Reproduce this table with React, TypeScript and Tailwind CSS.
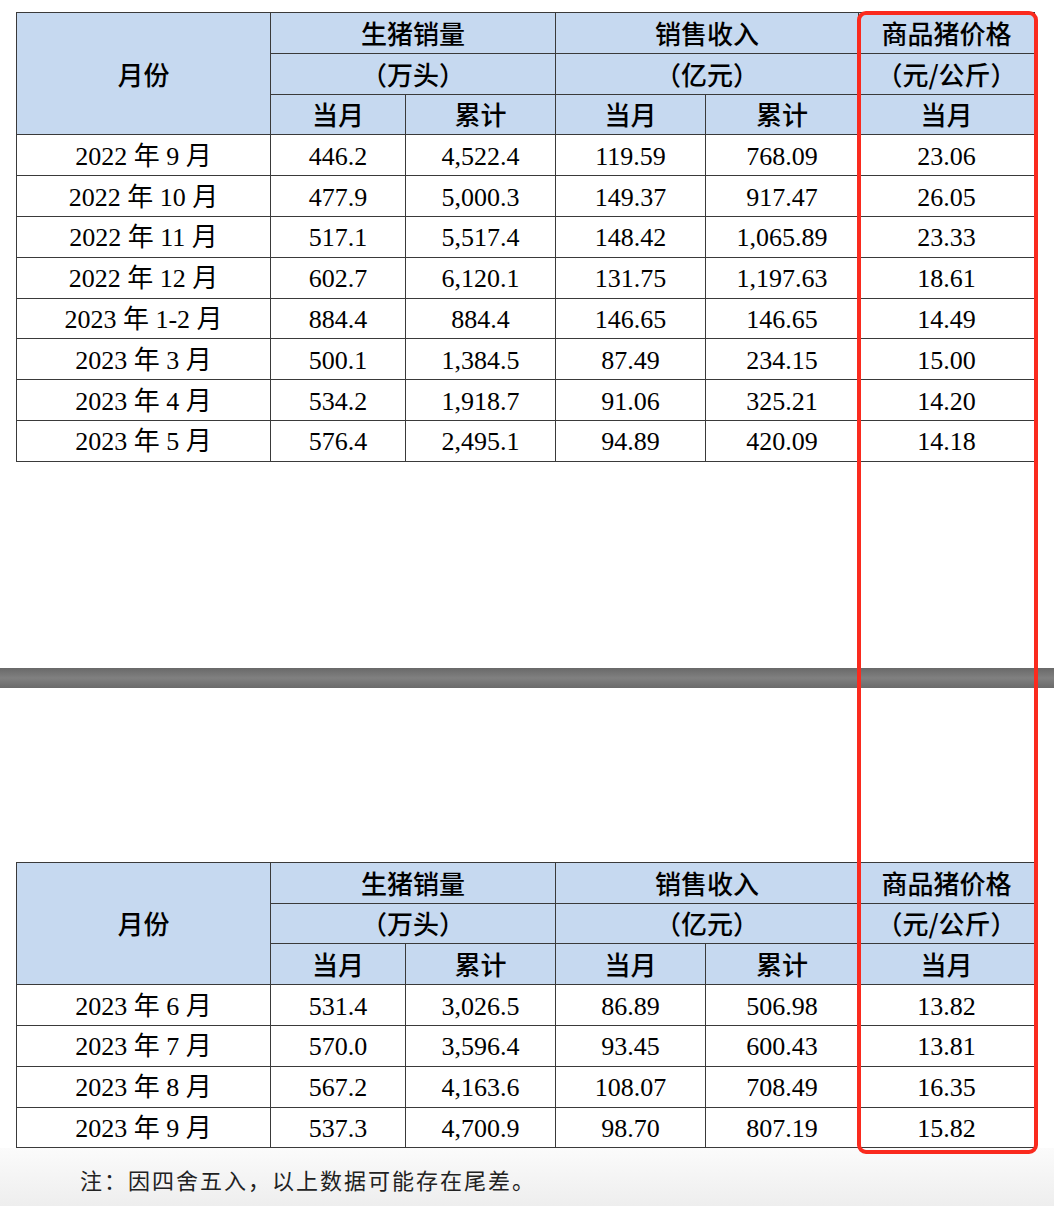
import React from "react";

type Row = [string, string, string, string, string, string];

const firstRows: Row[] = [
  ["2022 年 9 月", "446.2", "4,522.4", "119.59", "768.09", "23.06"],
  ["2022 年 10 月", "477.9", "5,000.3", "149.37", "917.47", "26.05"],
  ["2022 年 11 月", "517.1", "5,517.4", "148.42", "1,065.89", "23.33"],
  ["2022 年 12 月", "602.7", "6,120.1", "131.75", "1,197.63", "18.61"],
  ["2023 年 1-2 月", "884.4", "884.4", "146.65", "146.65", "14.49"],
  ["2023 年 3 月", "500.1", "1,384.5", "87.49", "234.15", "15.00"],
  ["2023 年 4 月", "534.2", "1,918.7", "91.06", "325.21", "14.20"],
  ["2023 年 5 月", "576.4", "2,495.1", "94.89", "420.09", "14.18"],
];

const secondRows: Row[] = [
  ["2023 年 6 月", "531.4", "3,026.5", "86.89", "506.98", "13.82"],
  ["2023 年 7 月", "570.0", "3,596.4", "93.45", "600.43", "13.81"],
  ["2023 年 8 月", "567.2", "4,163.6", "108.07", "708.49", "16.35"],
  ["2023 年 9 月", "537.3", "4,700.9", "98.70", "807.19", "15.82"],
];

const serif = "font-['Liberation_Serif','Noto_Sans_CJK_SC',serif]";
const head =
  "border border-[#3a3a3a] bg-[#c6d9f0] text-center text-[26px] font-medium leading-none text-black font-['Noto_Sans_CJK_SC',sans-serif]";
const cell = `border border-[#3a3a3a] pt-[3px] text-center text-[26px] leading-none text-black ${serif}`;

// one half of the report: three header rows and the monthly data
const PigTable = ({ rows }: { rows: Row[] }) => (
  <table className="w-[1018px] table-fixed border-collapse border border-black">
    <colgroup>
      <col className="w-[254px]" />
      <col className="w-[135px]" />
      <col className="w-[150px]" />
      <col className="w-[150px]" />
      <col className="w-[153px]" />
      <col className="w-[176px]" />
    </colgroup>
    <thead>
      <tr className="h-[40.8px]">
        <th rowSpan={3} className={head}>月份</th>
        <th colSpan={2} className={head}>生猪销量</th>
        <th colSpan={2} className={head}>销售收入</th>
        <th className={head}>商品猪价格</th>
      </tr>
      <tr className="h-[40.8px]">
        <th colSpan={2} className={head}>（万头）</th>
        <th colSpan={2} className={head}>（亿元）</th>
        <th className={head}>（元/公斤）</th>
      </tr>
      <tr className="h-[40.8px]">
        <th className={head}>当月</th>
        <th className={head}>累计</th>
        <th className={head}>当月</th>
        <th className={head}>累计</th>
        <th className={head}>当月</th>
      </tr>
    </thead>
    <tbody>
      {rows.map((r) => (
        <tr key={r[0]} className="h-[40.8px]">
          {r.map((v, i) => (
            <td key={i} className={cell}>
              {v}
            </td>
          ))}
        </tr>
      ))}
    </tbody>
  </table>
);

export default function App() {
  return (
    <div className="relative h-[1206px] w-[1054px] overflow-hidden bg-white">
      <div className="pl-4 pt-3">
        <PigTable rows={firstRows} />
      </div>

      <div className="mt-[206px] h-5 w-full bg-gradient-to-b from-[#696969] via-[#808080] to-[#6a6a6a]" />

      <div className="pl-4 pt-[174px]">
        <PigTable rows={secondRows} />
      </div>

      <div className="flex h-[62px] items-center bg-gradient-to-b from-[#fbfbfb] to-[#ededed] pl-[80px]">
        <p className="text-[22px] tracking-[2px] text-[#222] font-['Noto_Sans_CJK_SC',serif]">
          注：因四舍五入，以上数据可能存在尾差。
        </p>
      </div>

      {/* red highlight drawn over the price column */}
      <div className="pointer-events-none absolute left-[857px] top-[11px] h-[1143px] w-[181px] rounded-[9px] border-4 border-[#fa2a1e]" />
    </div>
  );
}
